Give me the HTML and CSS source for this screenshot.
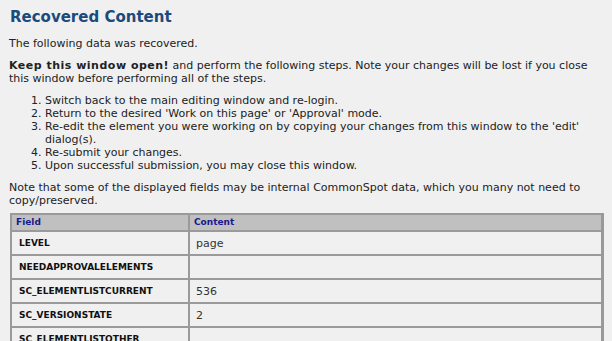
FILE: index.html
```html
<!DOCTYPE html>
<html lang="en">
<head>
    <meta charset="UTF-8">
    <title>Recovered Content</title>
    <link rel="stylesheet" href="styles.css">
</head>
<body>
    <h1>Recovered Content</h1>
    <p>The following data was recovered.</p>
    <p><b>Keep this window open!</b> and perform the following steps. Note your changes will be lost if you close this window before performing all of the steps.</p>
    <ol class="steps">
        <li>Switch back to the main editing window and re-login.</li>
        <li>Return to the desired 'Work on this page' or 'Approval' mode.</li>
        <li>Re-edit the element you were working on by copying your changes from this window to the 'edit' dialog(s).</li>
        <li>Re-submit your changes.</li>
        <li>Upon successful submission, you may close this window.</li>
    </ol>
    <p class="note">Note that some of the displayed fields may be internal CommonSpot data, which you many not need to copy/preserved.</p>

    <table class="data-table">
        <tr>
            <th class="col-field">Field</th>
            <th>Content</th>
        </tr>
        <tr>
            <td class="field">LEVEL</td>
            <td>page</td>
        </tr>
        <tr>
            <td class="field">NEEDAPPROVALELEMENTS</td>
            <td></td>
        </tr>
        <tr>
            <td class="field">SC_ELEMENTLISTCURRENT</td>
            <td>536</td>
        </tr>
        <tr>
            <td class="field">SC_VERSIONSTATE</td>
            <td>2</td>
        </tr>
        <tr>
            <td class="field">SC_ELEMENTLISTOTHER</td>
            <td></td>
        </tr>
    </table>
</body>
</html>
```

FILE: styles.css
```css
body {
    font-family: "DejaVu Sans", Verdana, sans-serif;
    font-size: 11px;
    line-height: 13px;
    color: #222;
    background-color: #f0f0f0;
    margin: 0;
    padding: 8px 9px;
}

h1 {
    font-size: 15px;
    line-height: 18px;
    color: #1b4a7c;
    margin: 0 0 11px 1px;
}

p {
    margin: 0 0 9px 0;
}

p b {
    letter-spacing: 0.5px;
}

.steps {
    margin: 0 0 9px 0;
    padding-left: 36px;
}

.note {
    margin-bottom: 6px;
}

.data-table {
    width: 594px;
    margin-left: 1px;
    border-collapse: collapse;
    border: 2px solid #999;
    border-right-width: 3px;
}

.data-table th,
.data-table td {
    border: 2px solid #9a9a9a;
    text-align: left;
    vertical-align: middle;
}

.data-table th {
    background-color: #c0c0c0;
    color: #1a1a8c;
    font-size: 9px;
    height: 15px;
    padding: 0 4px;
}

.data-table .col-field {
    width: 168px;
}

.data-table td {
    height: 22px;
    padding: 0 6px;
    color: #333;
    font-size: 11px;
}

.data-table td.field {
    font-size: 9px;
    font-weight: bold;
    color: #111;
    padding-left: 7px;
}
```
